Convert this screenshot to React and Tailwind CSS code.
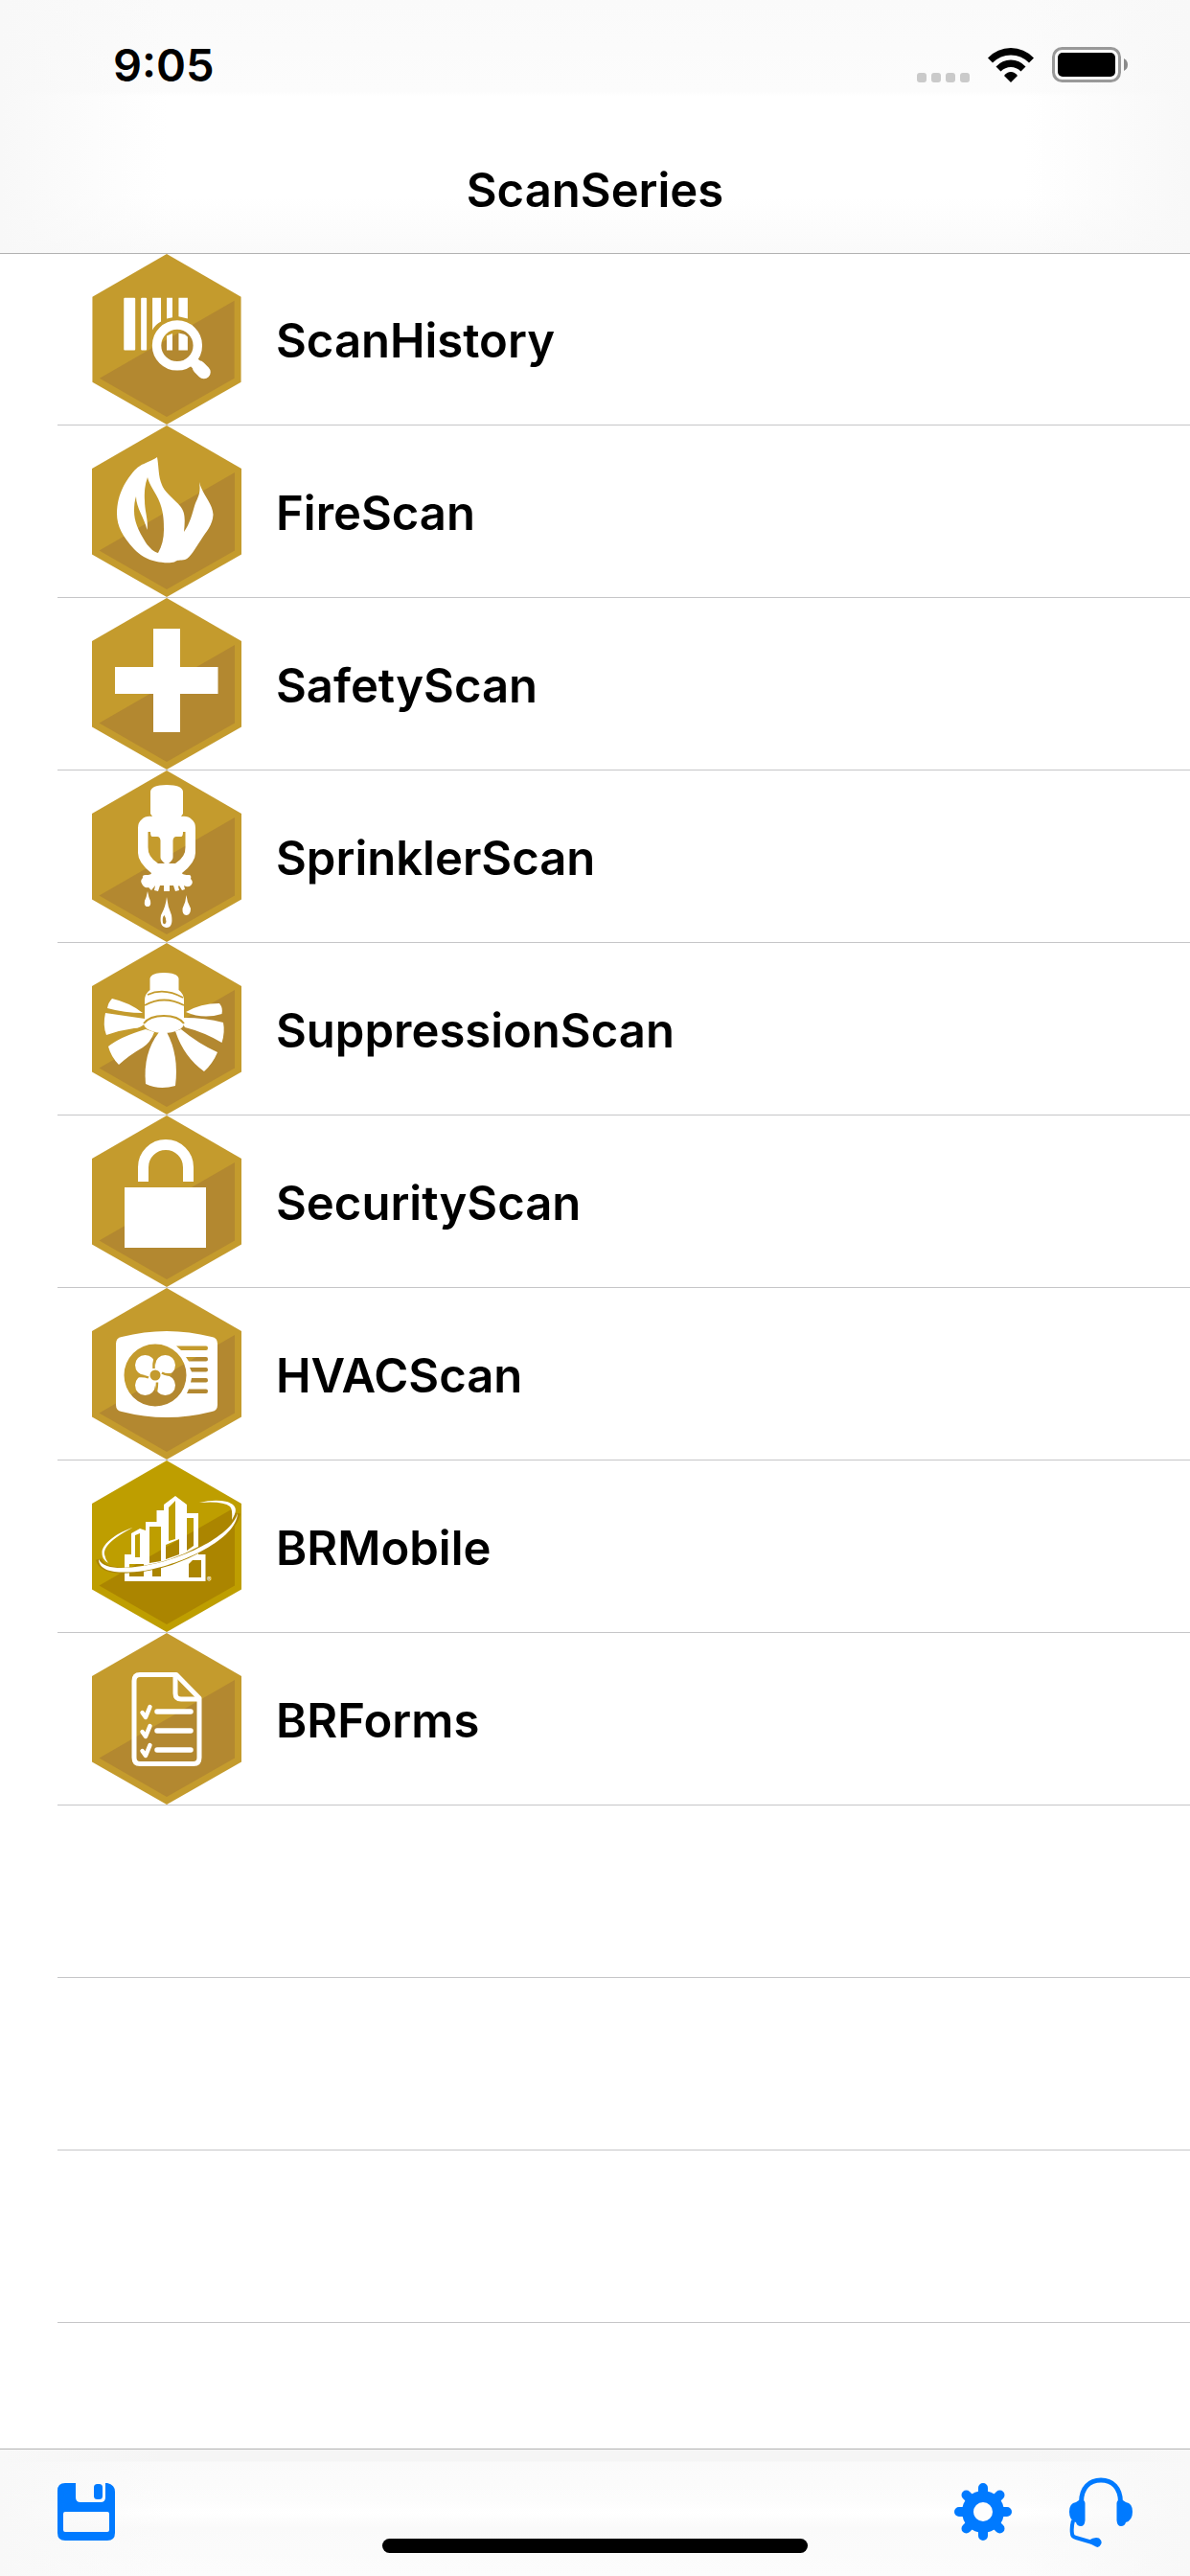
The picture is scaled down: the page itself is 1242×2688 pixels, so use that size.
import React from "react";

// ================= HEXAGON ICONS =================
const Hexagon = ({ children, light = "#c49b2d", dark = "#b38830" }) => (
  <svg viewBox="0 0 156 179" className="h-full w-[156px] shrink-0" aria-hidden="true">
    <path fill={light} d="M78 0 156 45V134.500L78 179 0 134.500V45Z" />
    <path fill={dark} d="M149 49V130.500L78 171 7.500 130.500Z" />
    {children}
  </svg>
);

const HistoryIcon = () => (
  <Hexagon>
    <g fill="#fff">
      <rect x="33" y="46" width="12" height="55" rx="1" />
      <rect x="51" y="46" width="6" height="55" rx="1" />
      <path d="M63 46H72V71Q66 74 63 80Z" />
      <path d="M78 46H84V66.500L78 68Z" />
      <path d="M90.500 46H100V68L90.500 65.500Z" />
      <path d="M78 86 84 83.500V101H78Z" />
      <path d="M90.500 83 97 84.500 100 87V101H90.500Z" />
    </g>
    <circle cx="89" cy="96" r="21.500" fill="none" stroke="#fff" strokeWidth="9.500" />
    <path d="M106 113 117 124" stroke="#fff" strokeWidth="11" />
    <path d="M112 119 117 124" stroke="#fff" strokeWidth="14" strokeLinecap="round" />
  </Hexagon>
);

const FireIcon = () => (
  <Hexagon>
    <path
      fill="#fff"
      fillRule="evenodd"
      d="M68 33C70 44 69 53 73 62C76 70 86 77 92 84C98 91 97 100 96 111C102 103 105 91 107 84C110 75 114 72 112 59C115 72 126 81 126.500 93C126 104 119 111 114 119C107 129 103 138 97 140C92 141 89 140 86 142.500C81 144 72 143 67.500 142C57 140 50 135 44 129C32 116 26 105 26 92C26 76 32 62 41 51C51 38 56 41 68 33ZM58 54C60 63 68 72 71 81C75 92 75 101 75 109C75 118 73 126 69 133C65 132 60 128 56 122C48 109 44 100 44 89Q44 80 46 74C46 86 55 97 57.500 109C59 98 55 90 55 78Q54 65 58 54Z"
    />
  </Hexagon>
);

const SafetyIcon = () => (
  <Hexagon>
    <path fill="#fff" d="M64 32H92V72H131.500V100H92V140H64V100H24V72H64Z" />
  </Hexagon>
);

const SprinklerIcon = () => (
  <Hexagon>
    <path
      fill="#fff"
      fillRule="evenodd"
      d="M61 22Q62 15 78 15Q94 15 95 22V45L93 48Q100 47 104 51Q108 54 108 60V86Q108 96 94 107Q94 109 102 109Q104 110 103 113Q106 116 104 119Q101 123 96 120L97 124 94 125 91 120 90 121 91 125 87 126 85 120H81V126H75V120H71L69 126 65 125 66 120 62 125 59 122Q54 123 52 118Q50 115 53 112Q52 109 56 109Q62 109 62 107Q48 96 48 86V60Q48 54 52 51Q56 47 63 48L61 45ZM58.500 64V80Q58 90 69 97H76Q71 93 71.500 90V73Q71 69 68 69H63Q61 69 61 64ZM97.500 64V80Q98 90 87 97H80Q85 93 84.500 90V73Q85 69 88 69H93Q95 69 95 64Z"
    />
    <path
      fill="#fff"
      fillRule="evenodd"
      d="M58 126Q59 132 61 136Q62 142 58 142Q54 142 55 136Q57 132 58 126ZM98.500 130Q99 137 103 144Q103 151 98.500 151Q94 151 94.500 144Q98 137 98.500 130ZM78 132Q79 142 83 151Q85 164 77.500 164Q70 163 72 151Q77 142 78 132ZM75.500 151Q73 153 74 159Q76 162 77.500 158Q77 153 75.500 151Z"
    />
  </Hexagon>
);

const SuppressionIcon = () => (
  <Hexagon>
    <g fill="#fff">
      <path d="M60.500 37Q62 31 75 31Q89 31 90.500 37V49Q96 53 96 60V82H55V60Q55 53 60.500 49Z" />
      <path d="M21 58Q39 62 53 73Q34 73 16 68Q17 62 21 58Z" />
      <path d="M14 73 55 79 56 83Q51 89 44 89Q29 91 15 96Q11 86 14 73Z" />
      <path d="M56 90 65 93Q61 104 53 109Q39 117 28 127Q20 119 17 108Q29 98 56 90Z" />
      <path d="M70 93H78Q91 117 87 149Q70 154 56 147Q53 115 70 93Z" />
      <path d="M87 92 93 90Q111 105 131 114Q126 126 117 134Q96 119 87 92Z" />
      <path d="M96 78Q118 78 137 83Q139 93 135.500 104Q117 93 97 88L94 83Z" />
      <path d="M98 72Q113 63 133 63Q137 68 135.500 74Q116 80 98 72Z" />
    </g>
    <g fill="none" stroke="#c49b2d" strokeWidth="1.800">
      <path d="M58 54Q75 46 95 57" />
      <path d="M55 65Q75 54 96 65" />
    </g>
    <ellipse cx="75" cy="84" rx="21" ry="10" fill="#fff" />
    <path d="M54 84Q60 76 75 76T96 84" fill="none" stroke="#c49b2d" strokeWidth="2" />
  </Hexagon>
);

const SecurityIcon = () => (
  <Hexagon>
    <path
      d="M53.500 69V54a23.500 23.500 0 0 1 47 0V69"
      fill="none"
      stroke="#fff"
      strokeWidth="11"
    />
    <rect x="34" y="75" width="85" height="63" fill="#fff" />
  </Hexagon>
);

const HvacIcon = () => (
  <Hexagon>
    <path
      fill="#fff"
      fillRule="evenodd"
      d="M25 58Q25 52 31 51Q78 39 125 51Q131 52 131 58V122Q131 128 125 129Q78 141 31 129Q25 128 25 122ZM33.500 91a32.500 32.500 0 1 0 65 0a32.500 32.500 0 1 0 -65 0ZM88 60.500H119q2 0 2 2.200t-2 2.300H93ZM98 72H119q2 0 2 2.200t-2 2.300H101ZM102 83H119q2 0 2 2.200t-2 2.300H104ZM104 94H119q2 0 2 2.200t-2 2.300H103ZM101 105.500H119q2 0 2 2.200t-2 2.300H99Z"
    />
    {/* fan blades and hub */}
    <g fill="#fff">
      <circle cx="55.500" cy="80.500" r="10.500" />
      <circle cx="76.500" cy="80.500" r="10.500" />
      <circle cx="76.500" cy="101.500" r="10.500" />
      <circle cx="55.500" cy="101.500" r="10.500" />
      <circle cx="66" cy="91" r="10.500" />
    </g>
    <path
      d="M65.500 74Q64 79 64.500 84M83 90Q77 91 73 88.500M67 108Q68 103 68 98.500M49 92Q55 91.500 59 93.500"
      fill="none"
      stroke="#c49b2d"
      strokeWidth="2.500"
    />
    <circle cx="66" cy="91" r="5.500" fill="#c49b2d" />
  </Hexagon>
);

const MobileIcon = () => (
  <Hexagon light="#be9e00" dark="#ab8500">
    <path
      fill="#fff"
      fillRule="evenodd"
      d="M87 37 99 46V55H111V98H118.500V126H34V98H41V76L50 71 56 73V64H67.500V52H75V46ZM80 49 87 42V82L80 84ZM60 69H72V105L60 107ZM45 78 50 76V101H45ZM77 88 91 82V98L77 103ZM99 60H106V89L99 94ZM39 108H54V121H39ZM63 111 72 109V121H63ZM101 108 105 104H114V122H101Z"
    />
    <path
      d="M7 103C10 116 33 116 53 113C90 108 148 80 152 55"
      fill="none"
      stroke="#ab8500"
      strokeWidth="6"
    />
    <g fill="#fff">
      <path d="M7 103C12 114 33 113 53 110C90 105 145 80 152 55C151 82 95 108 55 115C32 118 7 118 7 103Z" />
      <path d="M42.500 70C25 79 12 89 13 98Q14 103 17 107Q10 103 10.500 96C11 86 27 75 42.500 70Z" />
      <path d="M112 44Q128 40 141 43C153 47 151 54 146 62Q147 51 144 48Q137 42 112 44Z" />
    </g>
    <text x="120" y="127" fill="#fff" className="font-['Inter',sans-serif] text-[7px]">
      ®
    </text>
  </Hexagon>
);

const FormsIcon = () => (
  <Hexagon>
    <g fill="none" stroke="#fff" strokeWidth="5" strokeLinejoin="round">
      <path d="M88 43.500H50Q44 43.500 44 50V130Q44 136.500 50 136.500H106Q112 136.500 112 130V68Z" />
      <path d="M87 44V63Q87 69 93 69H112" />
    </g>
    <g fill="none" stroke="#fff" strokeWidth="5.500" strokeLinecap="round">
      <path d="M68 82H103M68 102H103M68 122H103" />
      <path d="M52.500 83 56 88 60.500 77M52.500 103 56 108 60.500 97M52.500 123 56 128 60.500 117" strokeLinejoin="round" strokeWidth="4.500" />
    </g>
  </Hexagon>
);

// ================= STATUS BAR =================
const StatusBar = () => (
  <div className="flex h-[132px] items-center justify-between pt-[3px] pl-[118px] pr-[65px]">
    <time className="text-[47px] leading-none font-semibold">9:05</time>
    <div className="flex items-end gap-[19px]">
      <div className="flex gap-[5px]">
        {[0, 1, 2, 3].map((dot) => (
          <span key={dot} className="size-2.5 rounded-[3px] bg-[#cacaca]" />
        ))}
      </div>
      <svg viewBox="0 0 48 36" className="h-9 w-12" aria-hidden="true">
        <path d="M0 10.500Q10 0 24 0T48 10.500L43 15.500Q35 7.500 24 7.500T5 15.500Z" />
        <path d="M8.500 19.500Q15 12.500 24 12.500T39.500 19.500L34.500 24.500Q30 20 24 20T13.500 24.500Z" />
        <path d="M17 29Q20 25 24 25T31 29L24 36Z" />
      </svg>
      <svg viewBox="0 0 79 37" className="h-[37px] w-[79px]" aria-hidden="true">
        <rect x="1.500" y="1.500" width="69" height="34" rx="9" fill="none" stroke="#999" strokeWidth="3" />
        <rect x="6" y="6" width="60" height="25" rx="5" />
        <path fill="#8a8a8a" d="M75 12Q79 14 79 18.500T75 25Z" />
      </svg>
    </div>
  </div>
);

// ================= TOOLBAR ICONS =================
const SaveIcon = () => (
  <svg viewBox="0 0 60 60" className="size-[60px]" fill="currentColor" aria-hidden="true">
    <path
      fillRule="evenodd"
      d="M8 0H19V15Q19 20 24 20H45Q50 20 50 15V0H52Q60 2 60 9V52Q60 60 52 60H8Q0 60 0 52V8Q0 0 8 0ZM8 30Q6 30 6 32V49Q6 51 8 51H52Q54 51 54 49V32Q54 30 52 30Z"
    />
    <rect x="38" y="1" width="9" height="16" rx="3.500" />
  </svg>
);

const GearIcon = () => (
  <svg viewBox="0 0 60 60" className="size-[60px]" aria-hidden="true">
    <g stroke="currentColor" strokeWidth="10" strokeLinecap="round">
      <path d="M30 5V55M5 30H55M12.500 12.500 47.500 47.500M47.500 12.500 12.500 47.500" />
    </g>
    <circle cx="30" cy="30" r="22" fill="currentColor" />
    <circle cx="30" cy="30" r="10" fill="#fdfdfd" />
  </svg>
);

const HeadsetIcon = () => (
  <svg viewBox="0 0 66 73" className="h-[73px] w-[66px]" fill="currentColor" aria-hidden="true">
    <path
      d="M12.500 26C12.500 11 21 3 33 3S53.500 11 53.500 26"
      fill="none"
      stroke="currentColor"
      strokeWidth="5"
    />
    <path d="M10 24Q16 22 16.500 27V45Q16 51 12 51Q8 51 7 47Q0 45 0 36T7 26Z" />
    <path d="M56 24Q50 22 49.500 27V45Q50 51 54 51Q58 51 59 47Q66 45 66 36T59 26Z" />
    <path
      d="M4 45Q2 53 3 59Q3 62 7 63L24 68"
      fill="none"
      stroke="currentColor"
      strokeWidth="4"
    />
    <path d="M20 66Q26 62 31 63.500Q35 67 33 70Q31 74 28 72.500Q23 71 20 67Z" />
  </svg>
);

const apps = [
  { name: "ScanHistory", Icon: HistoryIcon },
  { name: "FireScan", Icon: FireIcon },
  { name: "SafetyScan", Icon: SafetyIcon },
  { name: "SprinklerScan", Icon: SprinklerIcon },
  { name: "SuppressionScan", Icon: SuppressionIcon },
  { name: "SecurityScan", Icon: SecurityIcon },
  { name: "HVACScan", Icon: HvacIcon },
  { name: "BRMobile", Icon: MobileIcon },
  { name: "BRForms", Icon: FormsIcon },
];

// ================= APP =================
function App() {
  return (
    <div className="flex min-h-screen flex-col bg-white font-['Inter',sans-serif] text-black">
      <header className="border-b border-[#b2b2b2] bg-[linear-gradient(to_right,#f8f8f8,transparent_14%,transparent_86%,#f8f8f8),linear-gradient(#fafafa,#fcfcfc_36%,#ffffff_38%,#ffffff_78%,#fafafa)]">
        <StatusBar />
        <div className="flex h-[132px] items-center justify-center">
          <h1 className="text-[49px] leading-none font-semibold">ScanSeries</h1>
        </div>
      </header>

      <main className="flex-1">
        <ul className="pl-[60px]">
          {apps.map(({ name, Icon }) => (
            <li key={name} className="h-[180px] border-b border-[#c6c6c8] first:h-[179px]">
              <a href="#" className="flex h-full items-center gap-9 pl-9">
                <Icon />
                <span className="pt-[3px] text-[49px] leading-none font-semibold">{name}</span>
              </a>
            </li>
          ))}
          {/* empty rows below the last app */}
          {[0, 1, 2].map((row) => (
            <li key={row} className="h-[180px] border-b border-[#c6c6c8]" />
          ))}
        </ul>
      </main>

      <footer className="relative flex h-[133px] items-center justify-between border-t border-[#b2b2b2] bg-[linear-gradient(to_right,#f8f8f8,transparent_14%,transparent_86%,#f8f8f8),linear-gradient(#f5f5f5_9%,#fafafa_10%,#fcfcfc_40%,#ffffff_50%,#fafafa_62%,#fcfcfc)] px-[60px] pb-0.5 text-[#007aff]">
        <button type="button" aria-label="Save">
          <SaveIcon />
        </button>
        <div className="flex items-center gap-[60px]">
          <button type="button" aria-label="Settings">
            <GearIcon />
          </button>
          <button type="button" aria-label="Support">
            <HeadsetIcon />
          </button>
        </div>
        <div className="absolute inset-x-0 bottom-6 mx-auto h-[15px] w-[444px] rounded-full bg-black" />
      </footer>
    </div>
  );
}

export default App;
